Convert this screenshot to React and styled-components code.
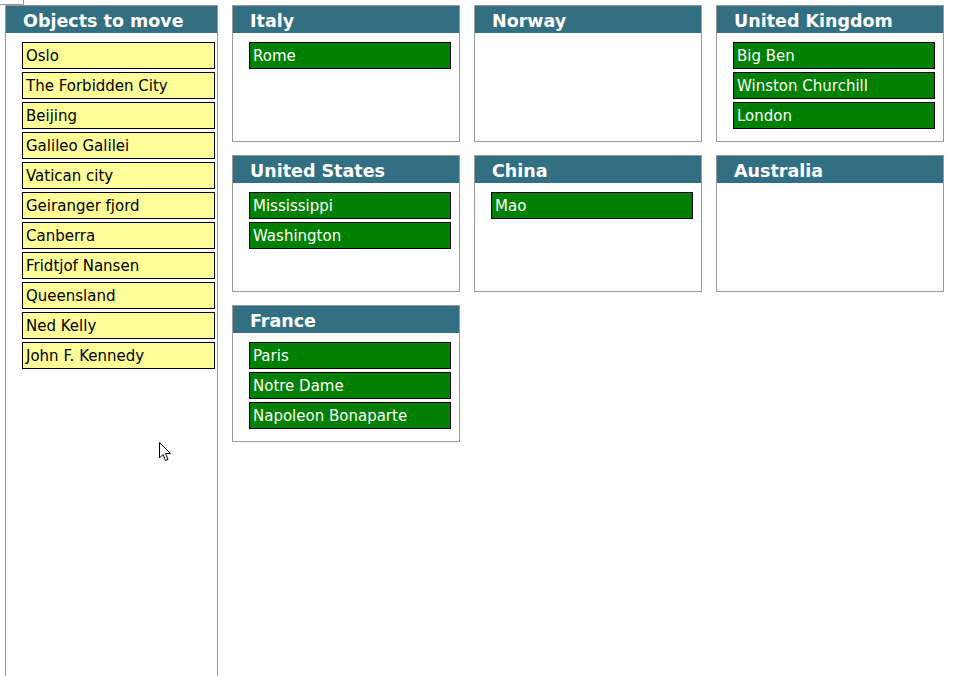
import styled, { createGlobalStyle } from "styled-components";

const GlobalStyle = createGlobalStyle`
  html, body {
    margin: 0;
    padding: 0;
    background: #fff;
    overflow: hidden;
  }
  body {
    font-family: "DejaVu Sans", Verdana, sans-serif;
  }
`;

const Page = styled.div`
  position: relative;
  display: flex;
  align-items: flex-start;
  gap: 14px;
  padding: 5px 0 0 5px;
  height: 671px;
  overflow: hidden;
`;

const Corner = styled.div`
  position: absolute;
  left: 0;
  top: 0;
  width: 23px;
  height: 4px;
  border-right: 1px solid #999;
  border-bottom: 1px solid #999;
`;

const Column = styled.div`
  width: 211px;
  height: 700px;
  border: 1px solid #999;
  flex-shrink: 0;
`;

const Grid = styled.div`
  display: grid;
  grid-template-columns: repeat(3, 228px);
  grid-auto-rows: 137px;
  column-gap: 14px;
  row-gap: 13px;
`;

const Box = styled.div`
  box-sizing: border-box;
  border: 1px solid #999;
  background: #fff;
`;

const Header = styled.div`
  box-sizing: border-box;
  height: 27px;
  background: #336f82;
  color: #fff;
  font-weight: bold;
  font-size: 17.5px;
  line-height: 24px;
  padding: 3px 0 0 ${(p) => p.$indent}px;
  margin-bottom: 9px;
  white-space: nowrap;
`;

const List = styled.div`
  display: flex;
  flex-direction: column;
  gap: 3px;
  padding-left: 16px;
`;

const Item = styled.div`
  box-sizing: border-box;
  width: ${(p) => p.$width}px;
  height: 27px;
  border: 1px solid #000;
  background: ${(p) => (p.$placed ? "#008000" : "#ffff99")};
  color: ${(p) => (p.$placed ? "#fff" : "#000")};
  font-size: 15px;
  line-height: 25px;
  padding: 1px 0 0 3px;
  white-space: nowrap;
`;

const Cursor = styled.svg`
  position: absolute;
  left: 159px;
  top: 442px;
`;

const objects = [
  "Oslo",
  "The Forbidden City",
  "Beijing",
  "Galileo Galilei",
  "Vatican city",
  "Geiranger fjord",
  "Canberra",
  "Fridtjof Nansen",
  "Queensland",
  "Ned Kelly",
  "John F. Kennedy",
];

const countries = [
  { name: "Italy", items: ["Rome"] },
  { name: "Norway", items: [] },
  { name: "United Kingdom", items: ["Big Ben", "Winston Churchill", "London"] },
  { name: "United States", items: ["Mississippi", "Washington"] },
  { name: "China", items: ["Mao"] },
  { name: "Australia", items: [] },
  { name: "France", items: ["Paris", "Notre Dame", "Napoleon Bonaparte"] },
];

export default function App() {
  return (
    <>
      <GlobalStyle />
      <Page>
        <Corner />
        <Column>
          <Header $indent={17}>Objects to move</Header>
          <List>
            {objects.map((o) => (
              <Item key={o} $width={193}>
                {o}
              </Item>
            ))}
          </List>
        </Column>
        <Grid>
          {countries.map((c) => (
            <Box key={c.name}>
              <Header $indent={17}>{c.name}</Header>
              <List>
                {c.items.map((i) => (
                  <Item key={i} $placed $width={202}>
                    {i}
                  </Item>
                ))}
              </List>
            </Box>
          ))}
        </Grid>
        <Cursor width="13" height="20" viewBox="0 0 13 20">
          <path
            d="M0.5 0.5 L0.5 16 L4 12.5 L6.5 18.5 L9 17.5 L6.5 11.5 L11.5 11.5 Z"
            fill="#fff"
            stroke="#000"
            strokeWidth="1"
          />
        </Cursor>
      </Page>
    </>
  );
}
